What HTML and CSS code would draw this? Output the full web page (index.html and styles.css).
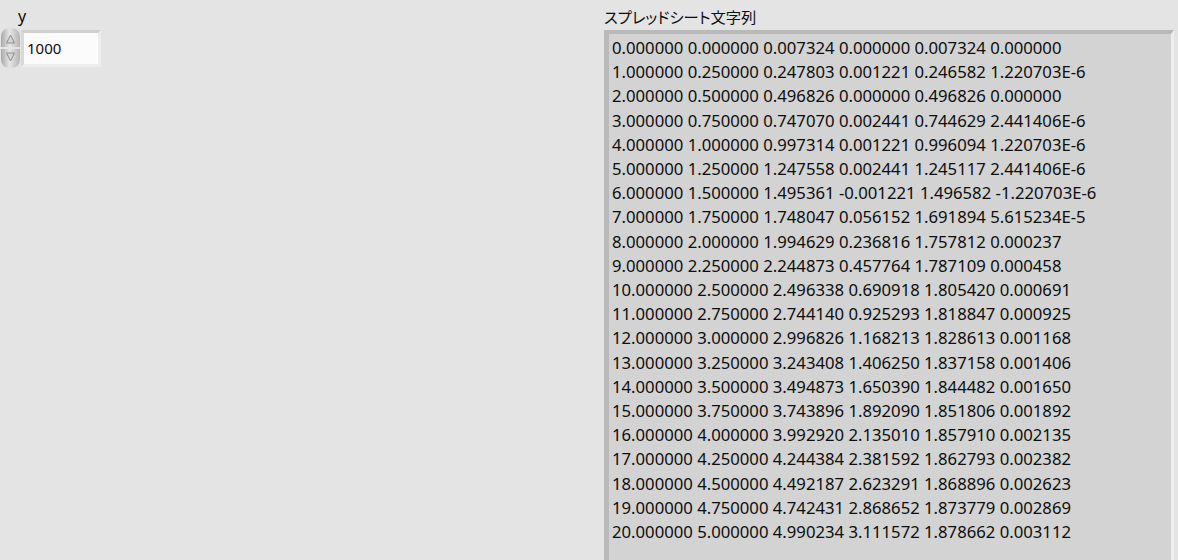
FILE: index.html
```html
<!DOCTYPE html>
<html lang="ja">
<head>
<meta charset="utf-8">
<link rel="stylesheet" href="styles.css">
</head>
<body>
<div class="panel">
  <div class="num-ctl">
    <div class="label">y</div>
    <div class="num-row">
      <div class="spinner">
        <svg width="21" height="42" viewBox="0 0 21 42">
          <defs>
            <linearGradient id="g" x1="0" y1="0" x2="1" y2="0">
              <stop offset="0" stop-color="#a9a9a9"/>
              <stop offset="0.45" stop-color="#e6e6e6"/>
              <stop offset="1" stop-color="#b4b4b4"/>
            </linearGradient>
          </defs>
          <path d="M1 20 L1 10 Q1 1 10.5 1 Q20 1 20 10 L20 20 Z" fill="url(#g)"/>
          <path d="M1 22 L1 32 Q1 41 10.5 41 Q20 41 20 32 L20 22 Z" fill="url(#g)"/>
          <path d="M6.5 16 L10.5 8 L14.5 16 Z" fill="#d4d4d4" stroke="#8e8e8e" stroke-width="1"/>
          <path d="M6.5 26 L10.5 34 L14.5 26 Z" fill="#d4d4d4" stroke="#8e8e8e" stroke-width="1"/>
        </svg>
      </div>
      <div class="num-field">1000</div>
    </div>
  </div>
  <div class="str-ctl">
    <div class="label">スプレッドシート文字列</div>
    <div class="str-box">
<div>0.000000 0.000000 0.007324 0.000000 0.007324 0.000000</div>
<div>1.000000 0.250000 0.247803 0.001221 0.246582 1.220703E-6</div>
<div>2.000000 0.500000 0.496826 0.000000 0.496826 0.000000</div>
<div>3.000000 0.750000 0.747070 0.002441 0.744629 2.441406E-6</div>
<div>4.000000 1.000000 0.997314 0.001221 0.996094 1.220703E-6</div>
<div>5.000000 1.250000 1.247558 0.002441 1.245117 2.441406E-6</div>
<div>6.000000 1.500000 1.495361 -0.001221 1.496582 -1.220703E-6</div>
<div>7.000000 1.750000 1.748047 0.056152 1.691894 5.615234E-5</div>
<div>8.000000 2.000000 1.994629 0.236816 1.757812 0.000237</div>
<div>9.000000 2.250000 2.244873 0.457764 1.787109 0.000458</div>
<div>10.000000 2.500000 2.496338 0.690918 1.805420 0.000691</div>
<div>11.000000 2.750000 2.744140 0.925293 1.818847 0.000925</div>
<div>12.000000 3.000000 2.996826 1.168213 1.828613 0.001168</div>
<div>13.000000 3.250000 3.243408 1.406250 1.837158 0.001406</div>
<div>14.000000 3.500000 3.494873 1.650390 1.844482 0.001650</div>
<div>15.000000 3.750000 3.743896 1.892090 1.851806 0.001892</div>
<div>16.000000 4.000000 3.992920 2.135010 1.857910 0.002135</div>
<div>17.000000 4.250000 4.244384 2.381592 1.862793 0.002382</div>
<div>18.000000 4.500000 4.492187 2.623291 1.868896 0.002623</div>
<div>19.000000 4.750000 4.742431 2.868652 1.873779 0.002869</div>
<div>20.000000 5.000000 4.990234 3.111572 1.878662 0.003112</div>
    </div>
  </div>
</div>
</body>
</html>
```
FILE: styles.css
```css
html, body {
  margin: 0;
  padding: 0;
  background: #e4e4e4;
  height: 100%;
  overflow: hidden;
}
body {
  font-family: "Noto Sans", "Noto Sans CJK JP", sans-serif;
  color: #0d0d0d;
}
.panel {
  display: flex;
  align-items: flex-start;
}
.num-ctl {
  width: 604px;
  flex: none;
}
.num-ctl .label {
  font-size: 16px;
  line-height: 20px;
  padding-left: 18px;
  padding-top: 6px;
  height: 27px;
  box-sizing: border-box;
}
.num-row {
  display: flex;
  align-items: center;
  height: 42px;
}
.spinner {
  width: 21px;
  height: 42px;
  display: flex;
}
.num-field {
  width: 80px;
  height: 37px;
  box-sizing: border-box;
  background: #fbfbfb;
  border-top: 3px solid #cfcfcf;
  border-left: 3px solid #d9d9d9;
  border-right: 3px solid #ededed;
  border-bottom: 3px solid #ededed;
  font-size: 15px;
  line-height: 31px;
  padding-left: 3px;
}
.str-ctl {
  flex: 1;
  padding-right: 4px;
}
.str-ctl .label {
  font-family: "Noto Sans CJK JP", sans-serif;
  font-feature-settings: "palt";
  font-size: 15.3px;
  line-height: 20px;
  padding-top: 6px;
  height: 30px;
  box-sizing: border-box;
}
.str-box {
  height: 540px;
  box-sizing: border-box;
  background: #d3d3d3;
  border-top: 4px solid #b9b9b9;
  border-left: 5px solid #b9b9b9;
  border-right: 3px solid #efefef;
  padding: 2px 0 0 3px;
  font-size: 16.7px;
  line-height: 24.2px;
  white-space: nowrap;
}
```
